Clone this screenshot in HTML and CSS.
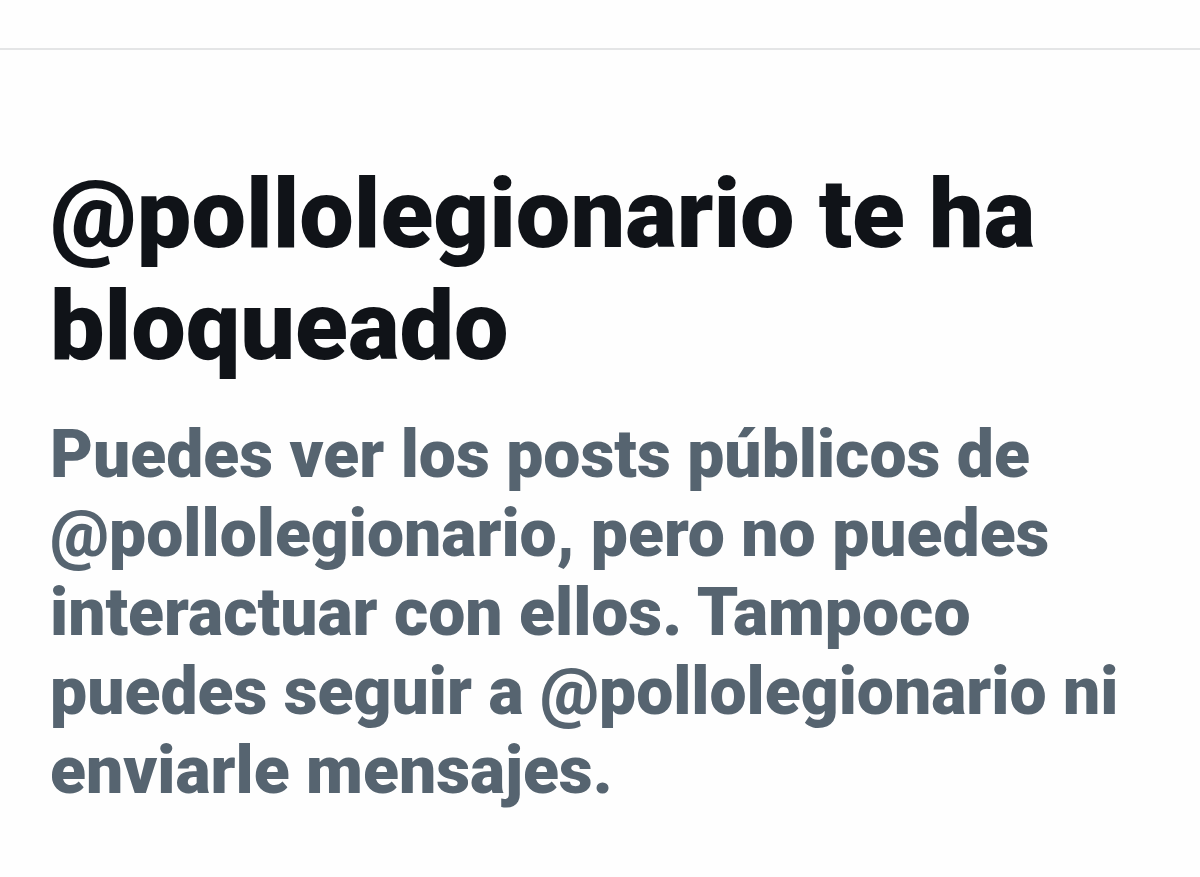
FILE: index.html
```html
<!DOCTYPE html>
<html lang="es">
<head>
<meta charset="utf-8">
<meta name="viewport" content="width=device-width, initial-scale=1">
<title>Cuenta bloqueada</title>
<link rel="stylesheet" href="styles.css">
</head>
<body>
<header class="topbar"></header>
<main class="notice">
<h1 class="notice-title">@pollolegionario te ha bloqueado</h1>
<p class="notice-text">Puedes ver los posts públicos de @pollolegionario, pero no puedes interactuar con ellos. Tampoco puedes seguir a @pollolegionario ni enviarle mensajes.</p>
</main>
</body>
</html>
```

FILE: styles.css
```css
body {
  margin: 0;
  background: #fefefe;
  font-family: Roboto, "Liberation Sans", sans-serif;
}

.topbar {
  height: 48px;
  border-bottom: 2px solid #e4e5e6;
}

.notice {
  padding: 108px 50px 64px;
}

.notice-title {
  margin: 0;
  color: #101318;
  font-size: 97px;
  font-weight: 900;
  line-height: 112px;
}

.notice-text {
  margin: 33px 0 0;
  color: #566470;
  font-size: 66px;
  font-weight: 900;
  line-height: 79px;
}
```
